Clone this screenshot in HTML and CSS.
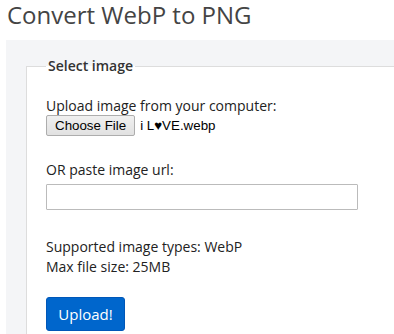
FILE: index.html
```html
<!DOCTYPE html>
<html>
<head>
<meta charset="utf-8">
<link rel="stylesheet" href="styles.css">
</head>
<body>
<h1 class="title">Convert WebP to PNG</h1>
<div class="panel">
  <form class="form">
    <fieldset class="box">
      <legend class="legend">Select image</legend>
      <div class="label first">Upload image from your computer:</div>
      <div class="file-row">
        <span class="file-btn">Choose File</span>
        <span class="file-name">i L♥VE.webp</span>
      </div>
      <div class="label second">OR paste image url:</div>
      <input class="url" type="text">
      <div class="info">
        <div>Supported image types: WebP</div>
        <div>Max file size: 25MB</div>
      </div>
      <button class="upload" type="button">Upload!</button>
    </fieldset>
  </form>
</div>
</body>
</html>
```
FILE: styles.css
```css
html, body {
  margin: 0;
  padding: 0;
  overflow: hidden;
  background: #fff;
}
body {
  font-family: "Open Sans", "Noto Sans", sans-serif;
  color: #222;
  font-size: 14px;
  line-height: 20px;
}
.title {
  margin: 0;
  padding: 1px 0 0 7px;
  font-size: 24px;
  line-height: 28px;
  font-weight: 400;
  color: #444;
  height: 39px;
}
.panel {
  margin-left: 6px;
  margin-right: -200px;
  background: #f4f5f7;
  padding: 16px 20px 20px 20px;
}
.form {
  margin: 0;
}
.box {
  margin: 0;
  border: 1px solid #ddd;
  background: #fff;
  padding: 0 19px 20px 19px;
}
.legend {
  padding: 0 2px;
  font-size: 14px;
  line-height: 20px;
  color: #333;
  font-weight: 600;
}
.label {
  color: #222;
}
.first {
  margin-top: 20px;
}
.file-row {
  display: flex;
  align-items: center;
  height: 21px;
  margin-top: -1px;
  font-family: "Liberation Sans", Arial, sans-serif;
  font-size: 13.33px;
}
.file-btn {
  box-sizing: border-box;
  height: 21px;
  line-height: 19px;
  padding: 0 8px;
  border: 1px solid #adadad;
  background: linear-gradient(#f0f0f0, #e1e1e1);
  color: #000;
  border-radius: 2px;
}
.file-name {
  margin-left: 5px;
  color: #000;
}
.second {
  margin-top: 24px;
}
.url {
  display: block;
  box-sizing: border-box;
  margin-top: 4px;
  width: 312px;
  height: 26px;
  border: 1px solid #bbb;
  border-radius: 1px;
  padding: 2px 4px;
}
.info {
  margin-top: 27px;
}
.upload {
  display: block;
  margin-top: 20px;
  box-sizing: border-box;
  width: 79px;
  height: 34px;
  border: 1px solid #0057b8;
  background: #0066cc;
  color: #fff;
  border-radius: 3px;
  font-family: "Open Sans", "Noto Sans", sans-serif;
  font-size: 15px;
  padding: 0;
}
```
